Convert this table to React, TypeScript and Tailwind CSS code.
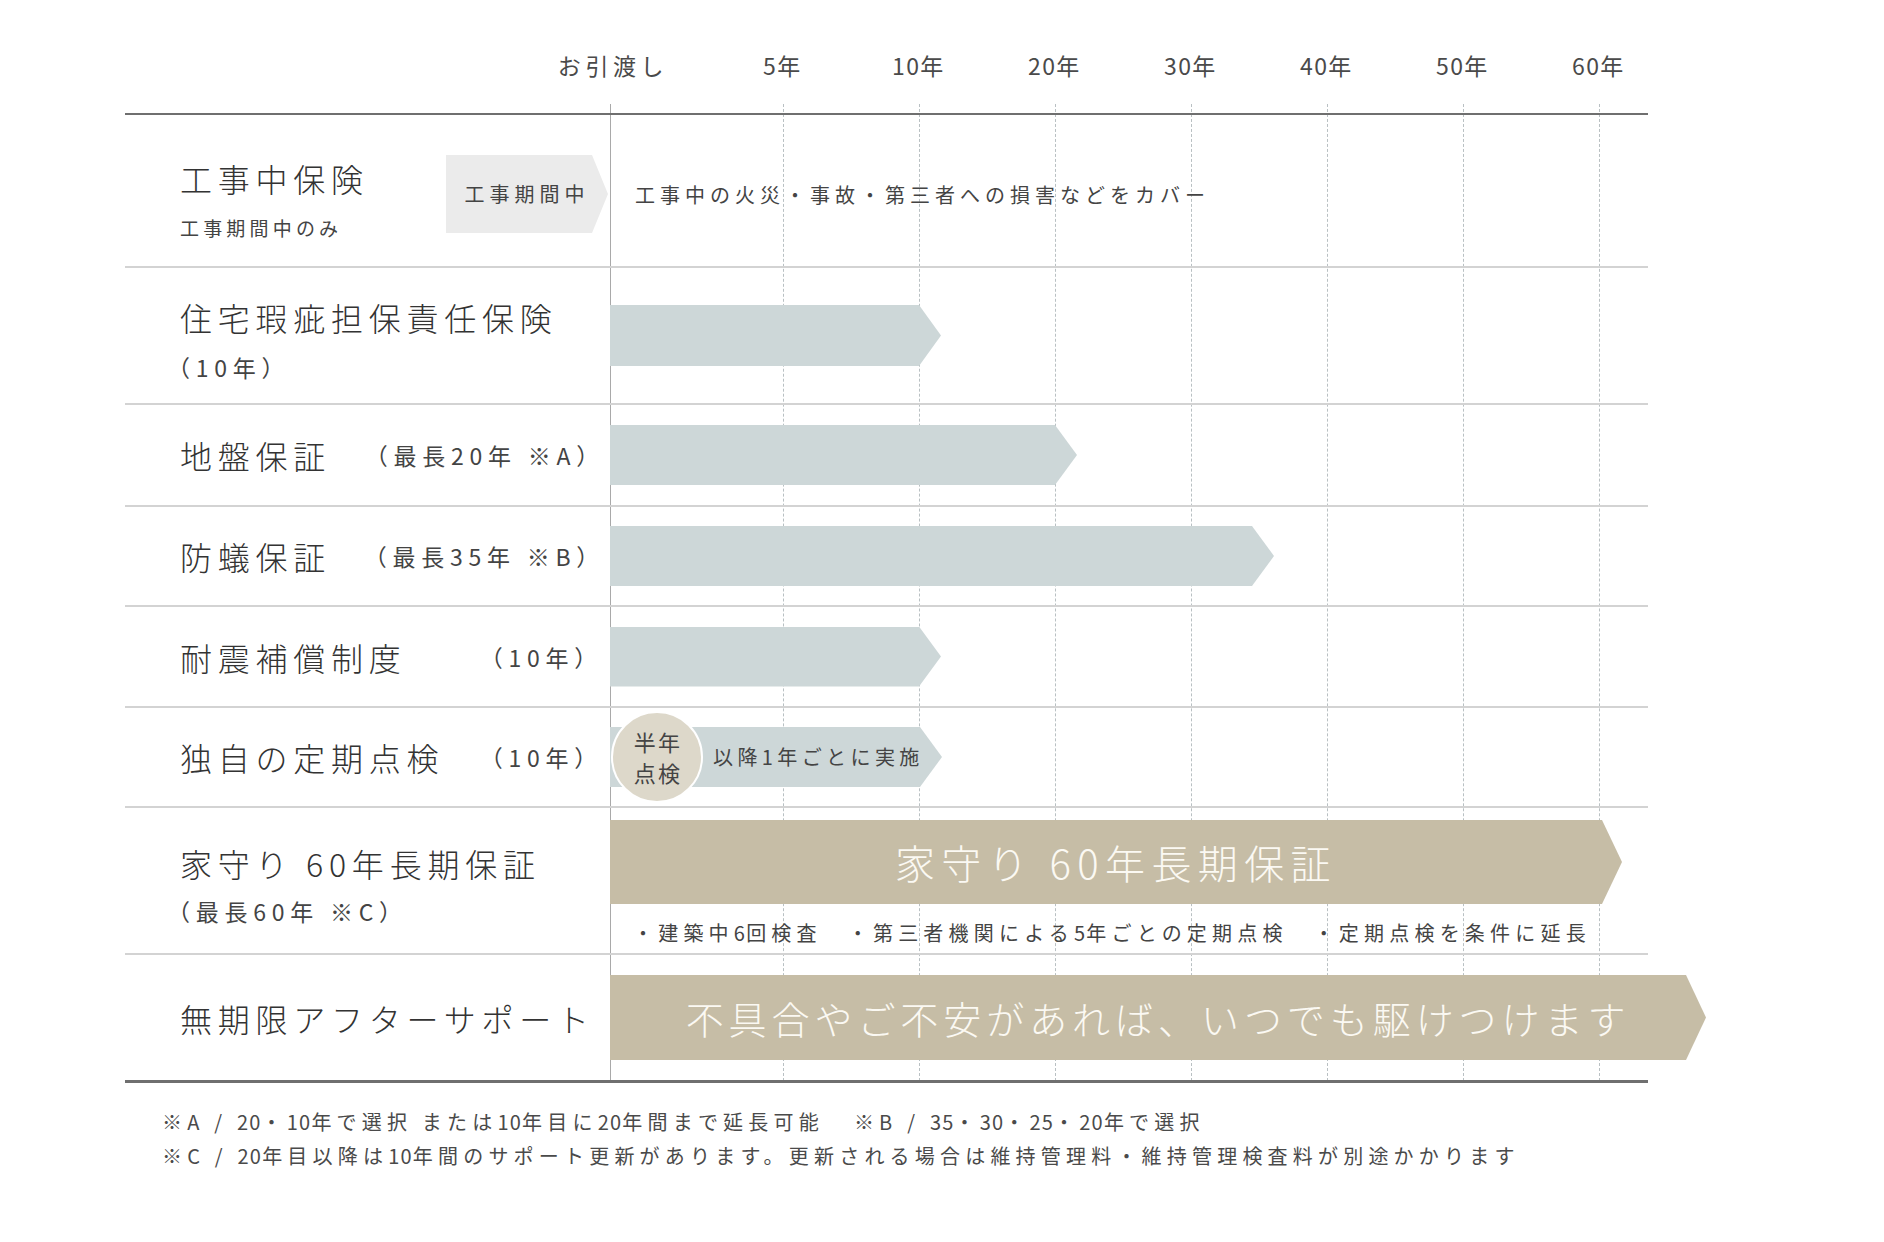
import type { ReactNode } from "react";

const tip22 = "[clip-path:polygon(0_0,calc(100%_-_22px)_0,100%_50%,calc(100%_-_22px)_100%,0_100%)]";
const tip16 = "[clip-path:polygon(0_0,calc(100%_-_16px)_0,100%_50%,calc(100%_-_16px)_100%,0_100%)]";
const tip20 = "[clip-path:polygon(0_0,calc(100%_-_20px)_0,100%_50%,calc(100%_-_20px)_100%,0_100%)]";

// digits in the original are set tight, kana/kanji are spaced out
function tight(text: string) {
  return text.split(/(\d+)/).map((part, i) =>
    /^\d+$/.test(part) ? (
      <span key={i} className="tracking-[0.06em]">{part}</span>
    ) : (
      part
    )
  );
}

function Row({ className, left, right }: { className: string; left: ReactNode; right: ReactNode }) {
  return (
    <div className={`relative grid grid-cols-[485px_1038px] ${className}`}>
      {left}
      {right}
    </div>
  );
}

function Title({ children }: { children: ReactNode }) {
  return <div className="whitespace-nowrap text-[32px] font-light leading-[40px] tracking-[0.18em] text-[#333]">{children}</div>;
}

function Note({ children, className = "" }: { children: ReactNode; className?: string }) {
  return <div className={`whitespace-nowrap text-[23px] leading-[30px] tracking-[0.25em] text-[#444] ${className}`}>{children}</div>;
}

export default function App() {
  const years = ["10年", "20年", "30年", "40年", "50年", "60年"];
  return (
    <div className="min-h-[1242px] w-[1884px] bg-white font-['Noto_Sans_CJK_JP',sans-serif] text-[#3c3c3c]">
      {/* axis labels */}
      <div className="flex h-[104px] pl-[545px] pt-[50px] text-[23px] leading-[30px] tracking-[0.2em] text-[#4a4a4a]">
        <div className="w-[136px] text-center">お引渡し</div>
        <div className="ml-[35px] w-[136px] text-center">{tight("5年")}</div>
        {years.map((y) => (
          <div key={y} className="w-[136px] text-center">{tight(y)}</div>
        ))}
      </div>

      <div className="relative ml-[125px] w-[1523px]">
        {/* grid lines */}
        <div className="pointer-events-none absolute bottom-[2px] left-[485px] top-0 flex">
          <div className="w-[173px] border-l border-[#a9a9a9]" />
          <div className="w-[136px] border-l border-dashed border-[#b9c0c3]" />
          <div className="w-[136px] border-l border-dashed border-[#b9c0c3]" />
          <div className="w-[136px] border-l border-dashed border-[#b9c0c3]" />
          <div className="w-[136px] border-l border-dashed border-[#b9c0c3]" />
          <div className="w-[136px] border-l border-dashed border-[#b9c0c3]" />
          <div className="w-[136px] border-l border-dashed border-[#b9c0c3]" />
          <div className="border-l border-dashed border-[#b9c0c3]" />
        </div>

        <div className="h-[9px]" />
        <div className="relative border-t-2 border-[#6f6f6f]" />

        {/* 工事中保険 */}
        <Row
          className="h-[153px] border-b-2 border-[#d3d3d3]"
          left={
            <div className="flex pl-[55px]">
              <div className="pt-[43px]">
                <Title>工事中保険</Title>
                <div className="mt-[17px] text-[19px] leading-[26px] tracking-[0.22em] text-[#444]">工事期間中のみ</div>
              </div>
              <div className={`ml-auto mr-[2px] mt-[40px] flex h-[78px] w-[162px] items-center justify-center bg-[#ebebeb] text-[20px] tracking-[0.25em] text-[#444] ${tip16}`}>
                工事期間中
              </div>
            </div>
          }
          right={
            <div className="flex items-center pl-[25px] pt-[9px] text-[20px] tracking-[0.25em] text-[#444]">
              工事中の火災・事故・第三者への損害などをカバー
            </div>
          }
        />

        {/* 住宅瑕疵担保責任保険 */}
        <Row
          className="h-[137px] border-b-2 border-[#d3d3d3]"
          left={
            <div className="pl-[55px] pt-[29px]">
              <Title>住宅瑕疵担保責任保険</Title>
              <Note className="-ml-[13px] mt-[15px]">（10年）</Note>
            </div>
          }
          right={
            <div className="flex items-center">
              <div className={`h-[61px] w-[331px] bg-[#cdd7d8] ${tip22}`} />
            </div>
          }
        />

        {/* 地盤保証 */}
        <Row
          className="h-[102px] border-b-2 border-[#d3d3d3]"
          left={
            <div className="flex items-center pl-[55px] pr-[5px]">
              <Title>地盤保証</Title>
              <Note className="ml-auto">（最長20年 ※A）</Note>
            </div>
          }
          right={
            <div className="flex items-center">
              <div className={`h-[60px] w-[467px] bg-[#cdd7d8] ${tip22}`} />
            </div>
          }
        />

        {/* 防蟻保証 */}
        <Row
          className="h-[100px] border-b-2 border-[#d3d3d3]"
          left={
            <div className="flex items-center pl-[55px] pr-[5px]">
              <Title>防蟻保証</Title>
              <Note className="ml-auto">（最長35年 ※B）</Note>
            </div>
          }
          right={
            <div className="flex items-center">
              <div className={`h-[60px] w-[664px] bg-[#cdd7d8] ${tip22}`} />
            </div>
          }
        />

        {/* 耐震補償制度 */}
        <Row
          className="h-[101px] border-b-2 border-[#d3d3d3]"
          left={
            <div className="flex items-center pl-[55px] pr-[7px]">
              <Title>耐震補償制度</Title>
              <Note className="ml-auto">（10年）</Note>
            </div>
          }
          right={
            <div className="flex items-center">
              <div className={`h-[60px] w-[331px] bg-[#cdd7d8] ${tip22}`} />
            </div>
          }
        />

        {/* 独自の定期点検 */}
        <Row
          className="h-[100px] border-b-2 border-[#d3d3d3]"
          left={
            <div className="flex items-center pl-[55px] pr-[7px]">
              <Title>独自の定期点検</Title>
              <Note className="ml-auto">（10年）</Note>
            </div>
          }
          right={
            <div className="relative flex items-center">
              <div className={`flex h-[60px] w-[332px] items-center bg-[#cdd7d8] pl-[103px] text-[20px] tracking-[0.22em] text-[#444] ${tip22}`}>
                以降1年ごとに実施
              </div>
              <div className="absolute left-[1px] top-1/2 flex h-[92px] w-[92px] -translate-y-1/2 flex-col items-center justify-center rounded-full border-2 border-white bg-[#ddd8ca] pl-[2px] text-[22px] leading-[31px] tracking-[0.1em] text-[#444]">
                <span>半年</span>
                <span>点検</span>
              </div>
            </div>
          }
        />

        {/* 家守り 60年長期保証 */}
        <Row
          className="h-[147px] border-b-2 border-[#d3d3d3]"
          left={
            <div className="pl-[55px] pt-[35px]">
              <Title>家守り 60年長期保証</Title>
              <Note className="-ml-[13px] mt-[13px]">（最長60年 ※C）</Note>
            </div>
          }
          right={
            <div className="flex flex-col pt-[12px]">
              <div className={`flex h-[84px] w-[1012px] items-center justify-center bg-[#c6bda6] text-[40px] font-light tracking-[0.16em] text-[#fbf9f3] ${tip20}`}>
                家守り 60年長期保証
              </div>
              <div className="mt-[15px] flex gap-[26px] whitespace-nowrap pl-[23px] text-[20px] leading-[28px] tracking-[0.26em] text-[#444]">
                <span>{tight("・建築中6回検査")}</span>
                <span>{tight("・第三者機関による5年ごとの定期点検")}</span>
                <span>・定期点検を条件に延長</span>
              </div>
            </div>
          }
        />

        {/* 無期限アフターサポート */}
        <Row
          className="h-[128px] border-b-[3px] border-[#6f6f6f]"
          left={
            <div className="flex items-center pl-[55px]">
              <Title>無期限アフターサポート</Title>
            </div>
          }
          right={
            <div className="flex items-center">
              <div className={`flex h-[85px] w-[1096px] shrink-0 items-center justify-center whitespace-nowrap bg-[#c6bda6] text-[38px] font-light tracking-[0.13em] text-[#fbf9f3] ${tip20}`}>
                不具合やご不安があれば、いつでも駆けつけます
              </div>
            </div>
          }
        />
      </div>

      {/* notes */}
      <div className="pl-[162px] pt-[22px] text-[20px] leading-[34px] tracking-[0.26em] text-[#4a4a4a]">
        <div className="whitespace-nowrap">
          {tight("※A / 20・10年で選択 または10年目に20年間まで延長可能")}
          <span className="ml-[30px]">{tight("※B / 35・30・25・20年で選択")}</span>
        </div>
        <div className="whitespace-nowrap">
          {tight("※C / 20年目以降は10年間のサポート更新があります。更新される場合は維持管理料・維持管理検査料が別途かかります")}
        </div>
      </div>
    </div>
  );
}
